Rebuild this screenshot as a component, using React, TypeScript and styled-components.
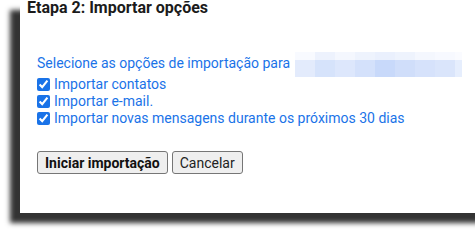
import React from 'react';
import styled, {createGlobalStyle} from 'styled-components';

const GlobalStyle = createGlobalStyle`
  html, body {
    margin: 0;
    background: #fff;
    overflow: hidden;
    font-family: Roboto, "Liberation Sans", sans-serif;
  }
`;

const Page = styled.div`
  width: 475px;
  height: 235px;
  overflow: hidden;
`;

const Panel = styled.div`
  margin: 0 0 0 20px;
  width: 480px;
  padding: 0 0 39px 7px;
  background: #fff;
  box-shadow: -10px 10px 5px rgba(0, 0, 0, 0.8);
`;

const Title = styled.h2`
  margin: 0;
  font-size: 16px;
  line-height: 15px;
  font-weight: 700;
  color: #1b1b1b;
`;

const Body = styled.div`
  padding-left: 10px;
  margin-top: 37px;
  color: #1a73e8;
  font-size: 14px;
`;

const Intro = styled.div`
  display: flex;
  height: 24px;
  line-height: 17px;
  > span {
    margin-top: 3px;
  }
`;

const Mosaic = styled.div`
  margin-left: 5px;
  display: grid;
  grid-template-columns: repeat(8, 20px) 7px;
  grid-template-rows: 8px 17px;
`;

const Cell = styled.div<{$c: string}>`
  background: ${p => p.$c};
`;

const Option = styled.label`
  display: flex;
  align-items: center;
  height: 17px;
  line-height: 17px;
  input {
    width: 13px;
    height: 13px;
    margin: 0 4px 0 0;
    accent-color: #1a73e8;
  }
`;

const Actions = styled.div`
  display: flex;
  gap: 4px;
  margin-top: 24px;
`;

const Button = styled.button<{$primary?: boolean}>`
  height: 23px;
  padding: 0 7px;
  font-family: Roboto, "Liberation Sans", sans-serif;
  font-size: 14px;
  font-weight: ${p => (p.$primary ? 700 : 400)};
  color: ${p => (p.$primary ? '#111' : '#222')};
  background: #efefef;
  border: 1px solid #767676;
  border-radius: 3px;
`;

const topRow = ['#f8faff', '#edf2fd', '#f4f7fe', '#eef3fd', '#eaf0fd', '#eef3fd', '#f4f7fe', '#f7f9ff', '#fafbff'];
const bottomRow = ['#e3ebfc', '#d6e3fb', '#dde7fc', '#d4e1fb', '#c8d9fa', '#d0defa', '#d6e2fb', '#dae5fb', '#e6eefd'];

const options = [
  'Importar contatos',
  'Importar e-mail.',
  'Importar novas mensagens durante os próximos 30 dias',
];

export default function App() {
  return (
    <Page>
      <GlobalStyle/>
      <Panel>
        <Title>Etapa 2: Importar opções</Title>
        <Body>
          <Intro>
            <span>Selecione as opções de importação para</span>
            <Mosaic>
              {[...topRow, ...bottomRow].map((c, i) => <Cell key={i} $c={c}/>)}
            </Mosaic>
          </Intro>
          {options.map(o => <Option key={o}>
            <input type="checkbox" defaultChecked/>
            {o}
          </Option>)}
          <Actions>
            <Button $primary>Iniciar importação</Button>
            <Button>Cancelar</Button>
          </Actions>
        </Body>
      </Panel>
    </Page>
  );
}
